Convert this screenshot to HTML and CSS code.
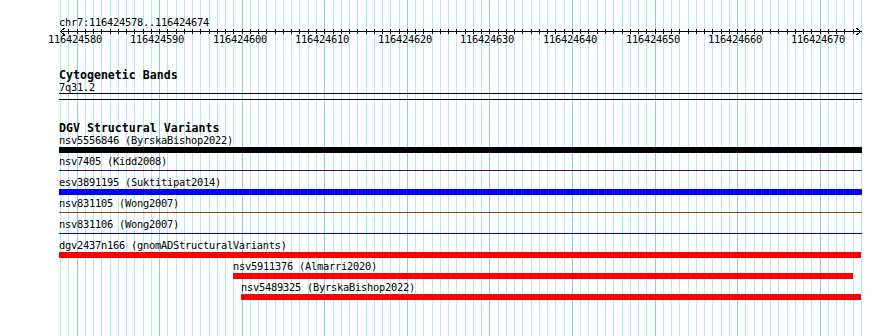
FILE: index.html
```html
<!DOCTYPE html>
<html lang="en">
<head>
<meta charset="utf-8">
<title>Genome browser – chr7:116424578..116424674</title>
<link rel="stylesheet" href="styles.css">
</head>
<body>
<div class="page">
  <svg class="grid" width="890" height="336" viewBox="0 0 890 336" aria-hidden="true">
    <path class="grid-light" d="M60.5 0V336M68.5 0V336M85.5 0V336M93.5 0V336M101.5 0V336M110.5 0V336M118.5 0V336M126.5 0V336M134.5 0V336M143.5 0V336M151.5 0V336M167.5 0V336M176.5 0V336M184.5 0V336M192.5 0V336M200.5 0V336M209.5 0V336M217.5 0V336M225.5 0V336M233.5 0V336M250.5 0V336M258.5 0V336M266.5 0V336M275.5 0V336M283.5 0V336M291.5 0V336M299.5 0V336M308.5 0V336M316.5 0V336M333.5 0V336M341.5 0V336M349.5 0V336M357.5 0V336M366.5 0V336M374.5 0V336M382.5 0V336M390.5 0V336M399.5 0V336M415.5 0V336M423.5 0V336M432.5 0V336M440.5 0V336M448.5 0V336M456.5 0V336M465.5 0V336M473.5 0V336M481.5 0V336M498.5 0V336M506.5 0V336M514.5 0V336M522.5 0V336M531.5 0V336M539.5 0V336M547.5 0V336M555.5 0V336M564.5 0V336M580.5 0V336M588.5 0V336M597.5 0V336M605.5 0V336M613.5 0V336M622.5 0V336M630.5 0V336M638.5 0V336M646.5 0V336M663.5 0V336M671.5 0V336M679.5 0V336M688.5 0V336M696.5 0V336M704.5 0V336M712.5 0V336M721.5 0V336M729.5 0V336M745.5 0V336M754.5 0V336M762.5 0V336M770.5 0V336M778.5 0V336M787.5 0V336M795.5 0V336M803.5 0V336M811.5 0V336M828.5 0V336M836.5 0V336M844.5 0V336M853.5 0V336M861.5 0V336"/>
    <path class="grid-dark" d="M77.5 0V336M159.5 0V336M242.5 0V336M324.5 0V336M407.5 0V336M489.5 0V336M572.5 0V336M655.5 0V336M737.5 0V336M820.5 0V336"/>
  </svg>

  <div class="content">
    <div class="position">chr7:116424578..116424674</div>

    <svg class="ruler" width="890" height="20" viewBox="0 26 890 20">
      <path class="ruler-line" d="M60 31.5H862"/>
      <path class="ruler-line" d="M64.5 28L60.5 31.5L64.5 35M856.5 28L860.5 31.5L856.5 35"/>
      <path class="ruler-line" d="M68.5 29V34M77.5 29V34M85.5 29V34M93.5 29V34M101.5 29V34M110.5 29V34M118.5 29V34M126.5 29V34M134.5 29V34M143.5 29V34M151.5 29V34M159.5 29V34M167.5 29V34M176.5 29V34M184.5 29V34M192.5 29V34M200.5 29V34M209.5 29V34M217.5 29V34M225.5 29V34M233.5 29V34M242.5 29V34M250.5 29V34M258.5 29V34M266.5 29V34M275.5 29V34M283.5 29V34M291.5 29V34M299.5 29V34M308.5 29V34M316.5 29V34M324.5 29V34M333.5 29V34M341.5 29V34M349.5 29V34M357.5 29V34M366.5 29V34M374.5 29V34M382.5 29V34M390.5 29V34M399.5 29V34M407.5 29V34M415.5 29V34M423.5 29V34M432.5 29V34M440.5 29V34M448.5 29V34M456.5 29V34M465.5 29V34M473.5 29V34M481.5 29V34M489.5 29V34M498.5 29V34M506.5 29V34M514.5 29V34M522.5 29V34M531.5 29V34M539.5 29V34M547.5 29V34M555.5 29V34M564.5 29V34M572.5 29V34M580.5 29V34M588.5 29V34M597.5 29V34M605.5 29V34M613.5 29V34M622.5 29V34M630.5 29V34M638.5 29V34M646.5 29V34M655.5 29V34M663.5 29V34M671.5 29V34M679.5 29V34M688.5 29V34M696.5 29V34M704.5 29V34M712.5 29V34M721.5 29V34M729.5 29V34M737.5 29V34M745.5 29V34M754.5 29V34M762.5 29V34M770.5 29V34M778.5 29V34M787.5 29V34M795.5 29V34M803.5 29V34M811.5 29V34M820.5 29V34M828.5 29V34M836.5 29V34M844.5 29V34M853.5 29V34"/>
      <g class="ruler-labels">
        <text x="75" y="43">116424580</text>
        <text x="157" y="43">116424590</text>
        <text x="240" y="43">116424600</text>
        <text x="322" y="43">116424610</text>
        <text x="405" y="43">116424620</text>
        <text x="487" y="43">116424630</text>
        <text x="570" y="43">116424640</text>
        <text x="653" y="43">116424650</text>
        <text x="735" y="43">116424660</text>
        <text x="818" y="43">116424670</text>
      </g>
    </svg>

    <section class="track track-cyto">
      <h2 class="track-title">Cytogenetic Bands</h2>
      <div class="band-label">7q31.2</div>
      <div class="band"></div>
    </section>

    <section class="track track-dgv">
      <h2 class="track-title">DGV Structural Variants</h2>

      <div class="feature" style="margin-left:59px">
        <div class="feature-label">nsv5556846 (ByrskaBishop2022)</div>
        <div class="feature-glyph"><div class="bar bar-black" style="width:803px"></div></div>
      </div>
      <div class="feature" style="margin-left:59px">
        <div class="feature-label">nsv7405 (Kidd2008)</div>
        <div class="feature-glyph"><div class="line line-purple" style="width:803px"></div></div>
      </div>
      <div class="feature" style="margin-left:59px">
        <div class="feature-label">esv3891195 (Suktitipat2014)</div>
        <div class="feature-glyph"><div class="bar bar-blue" style="width:803px"></div></div>
      </div>
      <div class="feature" style="margin-left:59px">
        <div class="feature-label">nsv831105 (Wong2007)</div>
        <div class="feature-glyph"><div class="line line-brown" style="width:803px"></div></div>
      </div>
      <div class="feature" style="margin-left:59px">
        <div class="feature-label">nsv831106 (Wong2007)</div>
        <div class="feature-glyph"><div class="line line-blue" style="width:803px"></div></div>
      </div>
      <div class="feature" style="margin-left:59px">
        <div class="feature-label">dgv2437n166 (gnomADStructuralVariants)</div>
        <div class="feature-glyph"><div class="bar bar-red" style="width:802px"></div></div>
      </div>
      <div class="feature" style="margin-left:233px">
        <div class="feature-label">nsv5911376 (Almarri2020)</div>
        <div class="feature-glyph"><div class="bar bar-red" style="width:620px"></div></div>
      </div>
      <div class="feature" style="margin-left:241px">
        <div class="feature-label">nsv5489325 (ByrskaBishop2022)</div>
        <div class="feature-glyph"><div class="bar bar-red" style="width:620px"></div></div>
      </div>
    </section>
  </div>
</div>
</body>
</html>
```

FILE: styles.css
```css
html, body {
  margin: 0;
  padding: 0;
  background: #ffffff;
}

.page {
  position: relative;
  width: 890px;
  height: 336px;
  overflow: hidden;
  background: #ffffff;
  font-family: "DejaVu Sans Mono", "Liberation Mono", monospace;
  font-size: 10.4px;
  letter-spacing: -0.26px;
  color: #000000;
}

.grid {
  position: absolute;
  top: 0;
  left: 0;
  z-index: 0;
}

.grid path {
  fill: none;
  stroke-width: 1;
  shape-rendering: crispEdges;
}

.grid-light {
  stroke: #afeeee;
}

.grid-dark {
  stroke: #87ceeb;
}

.content {
  position: relative;
  z-index: 1;
  padding-top: 16px;
}

.position {
  padding-left: 59px;
  height: 10px;
  line-height: 12px;
  white-space: pre;
}

.ruler {
  display: block;
}

.ruler-line {
  fill: none;
  stroke: #000000;
  stroke-width: 1;
  shape-rendering: crispEdges;
}

.ruler-labels text {
  font-family: "DejaVu Sans Mono", "Liberation Mono", monospace;
  font-size: 10.4px;
  letter-spacing: -0.26px;
  text-anchor: middle;
  fill: #000000;
}

.track-title {
  margin: 0;
  padding-left: 59px;
  font-size: 11.6px;
  letter-spacing: 0;
  font-weight: bold;
  height: 11px;
  line-height: 11px;
  white-space: pre;
}

.track-cyto {
  margin-top: 24px;
}

.band-label {
  padding-left: 59px;
  height: 12px;
  line-height: 12px;
}

.band {
  margin-left: 59px;
  width: 803px;
  height: 5px;
  border-top: 1px solid #000000;
  border-bottom: 1px solid #000000;
}

.track-dgv {
  margin-top: 23px;
}

.track-dgv .track-title {
  margin-bottom: -1px;
}

.feature {
  height: 21px;
}

.feature-label {
  height: 14px;
  line-height: 15px;
  white-space: pre;
}

.feature-glyph {
  height: 7px;
}

.bar {
  height: 6px;
}

.bar-black { background: #000000; }
.bar-blue { background: #0000ff; }
.bar-red { background: #ff0000; }

.line {
  height: 1px;
  margin-top: 2px;
}

.line-purple { background: #440088; }
.line-brown { background: #8b4513; }
.line-blue { background: #0000cc; }
```
